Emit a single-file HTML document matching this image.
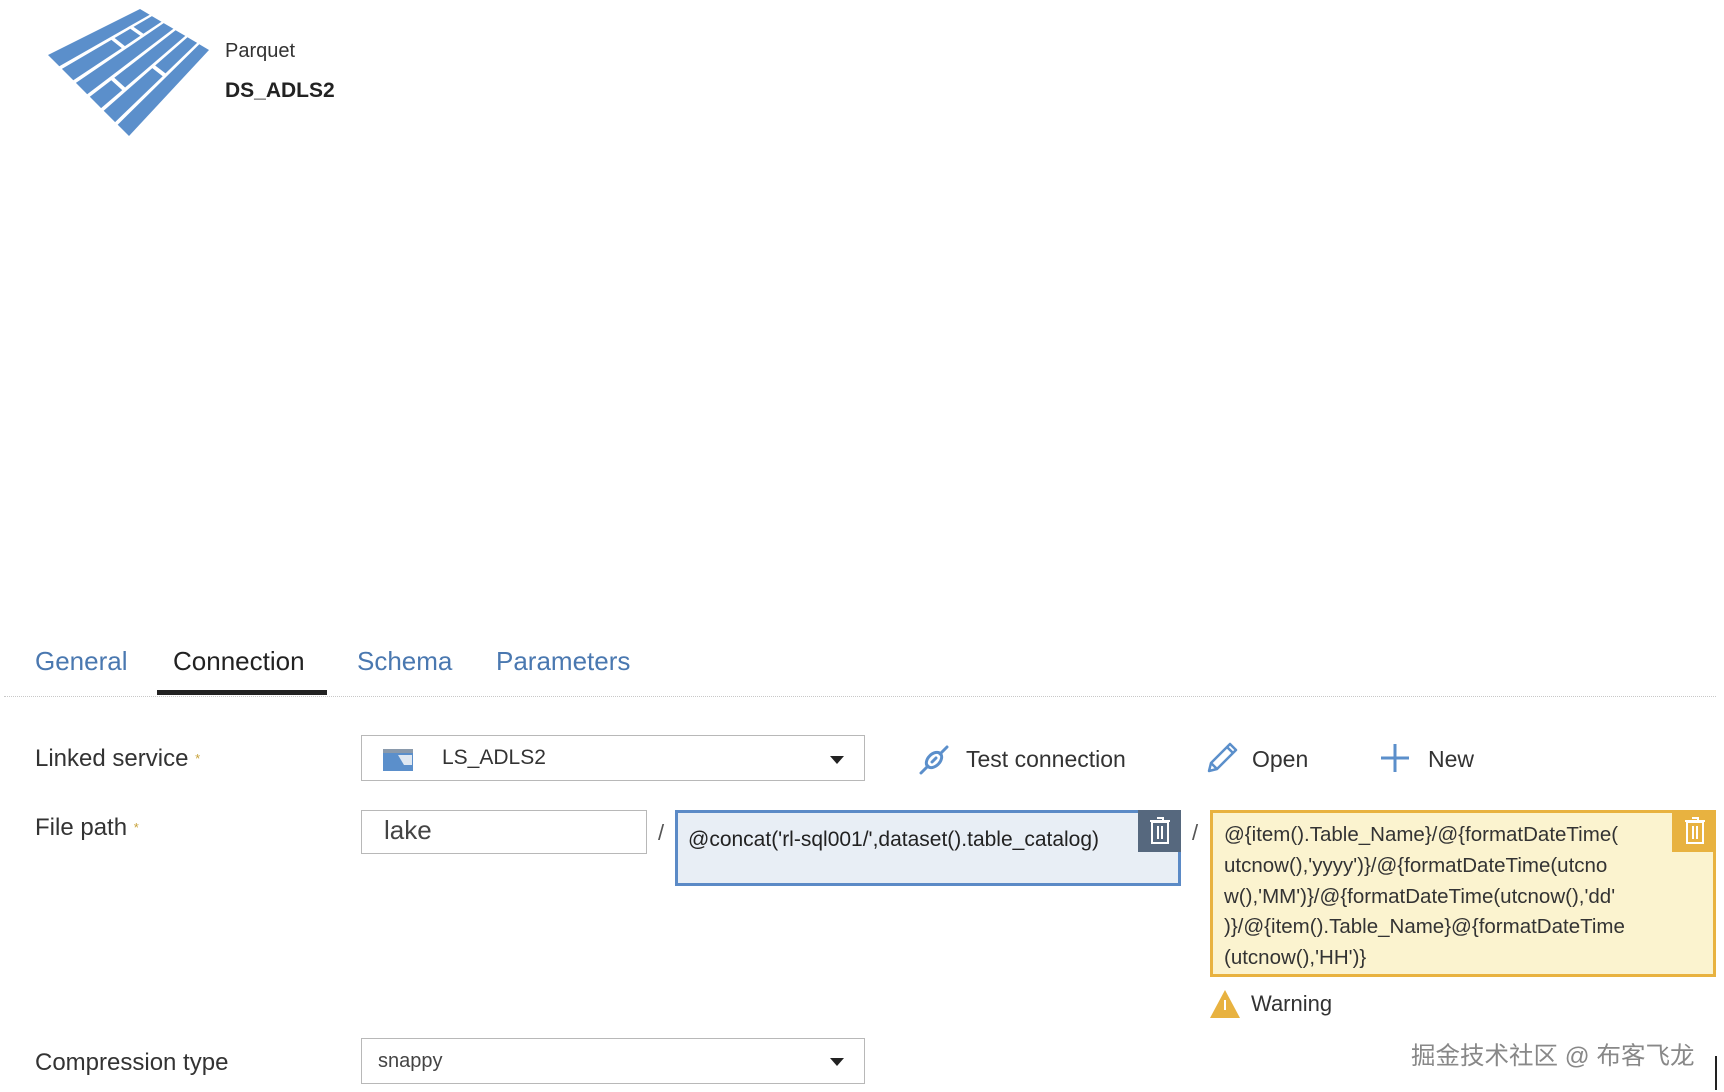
<!DOCTYPE html>
<html><head><meta charset="utf-8"><style>
body{margin:0;width:1724px;height:1092px;background:#fff;position:relative;overflow:hidden;font-family:"Liberation Sans","Noto Sans CJK SC",sans-serif;color:#222}
.a{position:absolute;white-space:nowrap}
.tab{font-size:26px;line-height:30px;top:646px;color:#4a78b0}
.lbl{font-size:24px;line-height:28px;color:#333}
.star{color:#c8a23a;font-size:13px;vertical-align:top}
.box{position:absolute;border:1px solid #b8b8b8;background:#fff;box-sizing:border-box}
.tb{font-size:23px;color:#333;line-height:28px}
</style></head><body>
<svg class="a" style="left:0;top:0" width="230" height="150">
<g fill="#5b8fcb">
<polygon points="48,55 140,9 149.7,14.7 59.3,66.3"/>
<polygon points="61.9,68.9 111.4,39.9 121.8,48.1 73.3,80.3"/>
<polygon points="114.6,38 130.3,28.8 140.3,35.8 124.9,46.1"/>
<polygon points="133.5,26.9 151.9,16.1 161.5,21.8 143.4,33.8"/>
<polygon points="75.9,82.9 163.7,23.1 173.4,28.8 87.2,94.2"/>
<polygon points="89.8,96.8 111.3,80.2 122.2,90.1 101.1,108.1"/>
<polygon points="114.3,77.8 175.6,30.2 185.3,35.9 125.1,87.5"/>
<polygon points="103.7,110.7 152.3,68.1 162.7,76.2 115.1,122.1"/>
<polygon points="155.2,65.5 187.5,37.2 197.1,42.9 165.5,73.4"/>
<polygon points="117.7,124.7 199.3,44.3 209,50 129,136"/>
</g></svg>
<div class="a" style="left:225px;top:40px;font-size:20px;color:#333">Parquet</div>
<div class="a" style="left:225px;top:79px;font-size:21px;font-weight:bold;color:#222">DS_ADLS2</div>

<div class="a tab" style="left:35px">General</div>
<div class="a tab" style="left:173px;color:#222">Connection</div>
<div class="a tab" style="left:357px">Schema</div>
<div class="a tab" style="left:496px">Parameters</div>
<div class="a" style="left:4px;top:696px;width:1712px;border-top:1px dotted #c8c8c8"></div>
<div class="a" style="left:157px;top:690px;width:170px;height:5px;background:#222"></div>

<div class="a lbl" style="left:35px;top:745px">Linked service <span class="star">*</span></div>
<div class="box" style="left:361px;top:735px;width:504px;height:46px"></div>
<svg class="a" style="left:382px;top:747px" width="32" height="26"><rect x="1" y="2" width="30" height="22" fill="#5b8fcb"/><rect x="1" y="2" width="30" height="4" fill="#8a9aac"/><path d="M16 8h14v10h-8z" fill="#dfe8f2"/></svg>
<div class="a tb" style="left:442px;top:744px;font-size:21px">LS_ADLS2</div>
<div class="a" style="left:830px;top:756px;width:0;height:0;border-left:7px solid transparent;border-right:7px solid transparent;border-top:8px solid #222"></div>

<svg class="a" style="left:918px;top:742px" width="34" height="34" fill="none" stroke="#5b8fcb" stroke-width="3" stroke-linecap="round"><ellipse cx="16" cy="18" rx="6" ry="9" transform="rotate(45 16 18)"/><path d="M22 12l7-7M10 24l-7 7M14 20l4-4"/></svg>
<div class="a tb" style="left:966px;top:745px">Test connection</div>
<svg class="a" style="left:1205px;top:741px" width="34" height="34" fill="none" stroke="#5b8fcb" stroke-width="2.5" stroke-linejoin="round"><path d="M4 30l2-8L25 3l6 6L12 28z M6 22l6 6 M22 6l6 6"/></svg>
<div class="a tb" style="left:1252px;top:745px">Open</div>
<svg class="a" style="left:1380px;top:743px" width="30" height="30" stroke="#5b8fcb" stroke-width="3"><path d="M15 1v28M1 15h28"/></svg>
<div class="a tb" style="left:1428px;top:745px">New</div>

<div class="a lbl" style="left:35px;top:814px">File path <span class="star">*</span></div>
<div class="box" style="left:361px;top:810px;width:286px;height:44px"></div>
<div class="a" style="left:384px;top:815px;font-size:26px;color:#444">lake</div>
<div class="a" style="left:658px;top:820px;font-size:22px;color:#555">/</div>
<div class="a" style="left:675px;top:810px;width:506px;height:76px;box-sizing:border-box;border:3px solid #5b8ac6;background:#e8eef5"></div>
<div class="a" style="left:688px;top:828px;font-size:21px;color:#222">@concat('rl-sql001/',dataset().table_catalog)</div>
<div class="a" style="left:1138px;top:810px;width:43px;height:42px;background:#56687e"></div>
<svg class="a" style="left:1148px;top:815px" width="24" height="32" fill="none" stroke="#fff" stroke-width="2"><path d="M4 7h16v21H4z M2 6h20 M9 3h6v3 M10 11v13 M14 11v13"/></svg>
<div class="a" style="left:1192px;top:820px;font-size:22px;color:#555">/</div>
<div class="a" style="left:1210px;top:810px;width:506px;height:167px;box-sizing:border-box;border:3px solid #e8b240;background:#fbf3cf"></div>
<div class="a" style="left:1224px;top:820px;font-size:20.5px;line-height:30.8px;color:#333">@{item().Table_Name}/@{formatDateTime(<br>utcnow(),'yyyy')}/@{formatDateTime(utcno<br>w(),'MM')}/@{formatDateTime(utcnow(),'dd'<br>)}/@{item().Table_Name}@{formatDateTime<br>(utcnow(),'HH')}</div>
<div class="a" style="left:1672px;top:810px;width:44px;height:42px;background:#e8b240"></div>
<svg class="a" style="left:1683px;top:815px" width="24" height="32" fill="none" stroke="#fff" stroke-width="2"><path d="M4 7h16v21H4z M2 6h20 M9 3h6v3 M10 11v13 M14 11v13"/></svg>
<svg class="a" style="left:1209px;top:989px" width="32" height="30"><path d="M16 1L31 29H1z" fill="#e8b240"/><path d="M16 11v10" stroke="#fff" stroke-width="2"/></svg>
<div class="a tb" style="left:1251px;top:990px;font-size:22px">Warning</div>

<div class="a lbl" style="left:35px;top:1049px">Compression type</div>
<div class="box" style="left:361px;top:1038px;width:504px;height:46px"></div>
<div class="a" style="left:378px;top:1050px;font-size:20px;color:#444">snappy</div>
<div class="a" style="left:830px;top:1058px;width:0;height:0;border-left:7px solid transparent;border-right:7px solid transparent;border-top:8px solid #222"></div>
<div class="a" style="left:1411px;top:1037px;font-size:24.5px;color:#888">掘金技术社区 @ 布客飞龙</div>
<div class="a" style="left:1715px;top:1056px;width:2px;height:34px;background:#222"></div>
</body></html>
